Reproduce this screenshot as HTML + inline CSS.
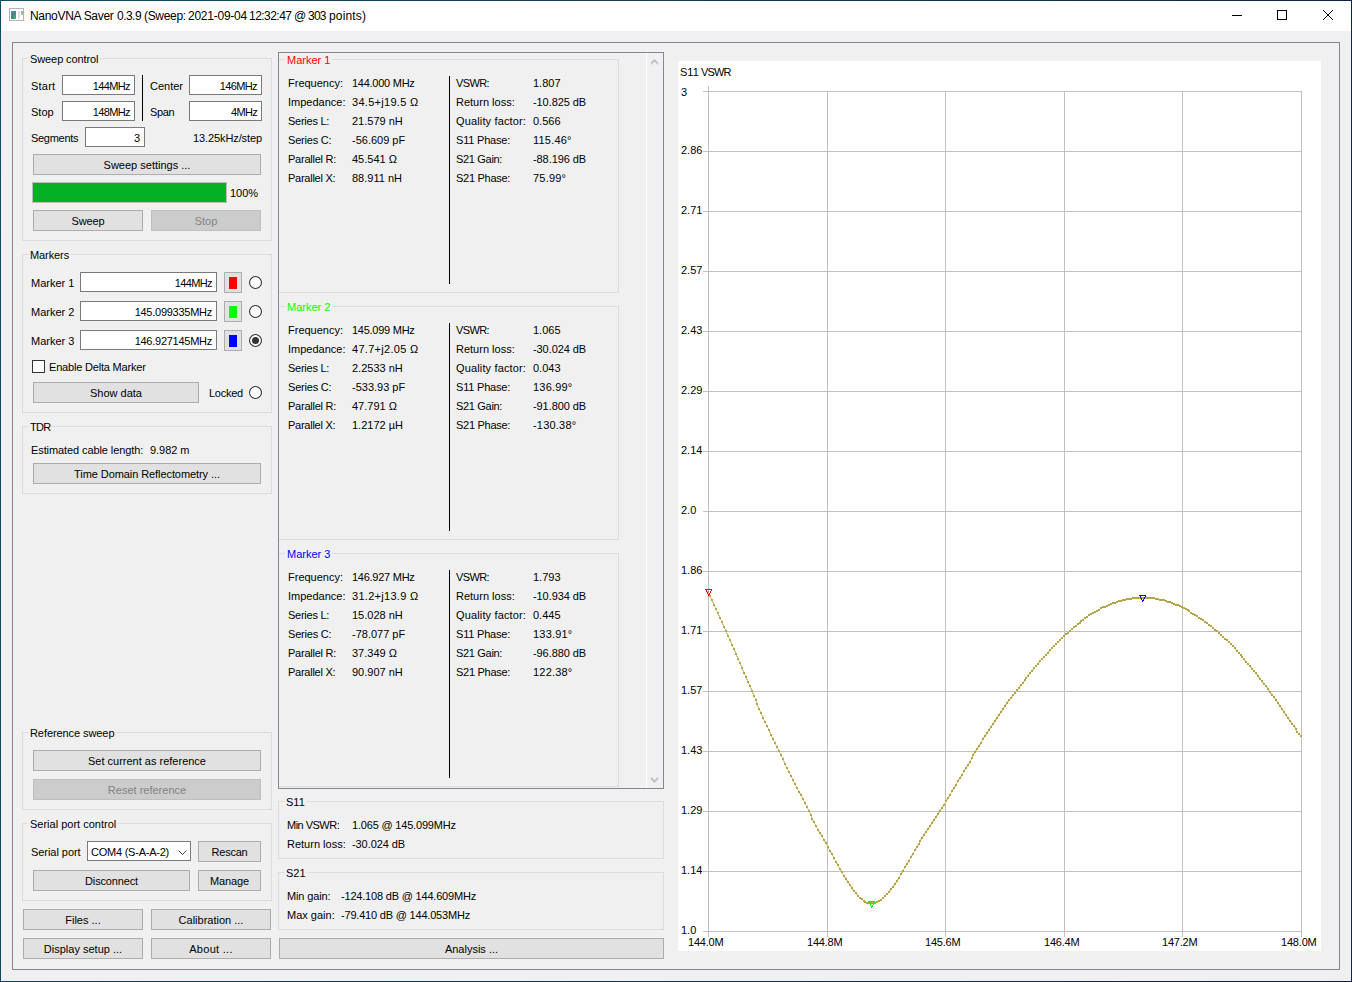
<!DOCTYPE html>
<html><head><meta charset="utf-8"><title>NanoVNA Saver</title>
<style>
html,body{margin:0;padding:0;}
body{width:1352px;height:982px;position:relative;overflow:hidden;background:#f0f0f0;font-family:"Liberation Sans", sans-serif;font-size:11px;color:#000;}
body>div,body>svg{position:absolute;}
</style></head><body>
<div style="left:0;top:0;width:1352px;height:31px;background:#fff"></div>
<div style="left:0;top:0;width:1352px;height:1px;background:linear-gradient(to right,#0f4c6b,#143a5e 50%,#0c2448)"></div>
<div style="left:0;top:0;width:1px;height:982px;background:linear-gradient(#0f4c6b,#0c4562)"></div>
<div style="left:1351px;top:0;width:1px;height:982px;background:#0c2650"></div>
<div style="left:0;top:981px;width:1352px;height:1px;background:linear-gradient(to right,#0c4562,#103458 50%,#0e1e40)"></div>
<svg style="left:9px;top:8px" width="15" height="13" viewBox="0 0 15 13">
<defs><linearGradient id="ig" x1="0" y1="0" x2="1" y2="1"><stop offset="0" stop-color="#5f86b8"/><stop offset="0.5" stop-color="#3f8a8e"/><stop offset="1" stop-color="#4fb060"/></linearGradient>
<linearGradient id="ig2" x1="0" y1="0" x2="0" y2="1"><stop offset="0" stop-color="#7fa2cc"/><stop offset="1" stop-color="#9fd890"/></linearGradient></defs>
<rect x="0.5" y="0.5" width="14" height="12" fill="#fff" stroke="#b0b3b8"/>
<rect x="2" y="3" width="5" height="8" fill="url(#ig)"/>
<rect x="9" y="3" width="2" height="8" fill="#e2e2e2"/>
<rect x="12" y="3" width="2" height="4" fill="url(#ig2)"/>
</svg>
<div style="top:8px;line-height:16px;height:16px;white-space:pre;font-size:12px;letter-spacing:-0.298px;left:30px;">NanoVNA Saver</div>
<div style="top:8px;line-height:16px;height:16px;white-space:pre;font-size:12px;letter-spacing:-0.534px;left:117px;">0.3.9</div>
<div style="top:8px;line-height:16px;height:16px;white-space:pre;font-size:12px;letter-spacing:-0.317px;left:144px;">(Sweep:</div>
<div style="top:8px;line-height:16px;height:16px;white-space:pre;font-size:12px;letter-spacing:-0.248px;left:188px;">2021-09-04</div>
<div style="top:8px;line-height:16px;height:16px;white-space:pre;font-size:12px;letter-spacing:-0.536px;left:249px;">12:32:47</div>
<div style="top:8px;line-height:16px;height:16px;white-space:pre;font-size:12px;letter-spacing:-1.488px;left:294px;">@</div>
<div style="top:8px;line-height:16px;height:16px;white-space:pre;font-size:12px;letter-spacing:-0.739px;left:308px;">303</div>
<div style="top:8px;line-height:16px;height:16px;white-space:pre;font-size:12px;letter-spacing:0.155px;left:329px;">points)</div>
<div style="left:1232px;top:15px;width:10px;height:1px;background:#000"></div>
<div style="left:1277px;top:10px;width:10px;height:10px;border:1px solid #000;box-sizing:border-box"></div>
<svg style="left:1322px;top:9px" width="12" height="12" viewBox="0 0 12 12"><path d="M1 1 L11 11 M11 1 L1 11" stroke="#000" stroke-width="1" fill="none"/></svg>
<div style="left:12px;top:42px;width:1328px;height:928px;border:1px solid #828790;box-sizing:border-box;"></div>
<div style="left:22px;top:58px;width:250px;height:183px;border:1px solid #dcdcdc;box-sizing:border-box;"></div>
<div style="left:28px;top:52px;padding:0 2px;background:#f0f0f0;line-height:14px;height:14px;white-space:pre;"><span style="letter-spacing:-0.096px">Sweep control</span></div>
<div style="top:79px;line-height:14px;height:14px;white-space:pre;letter-spacing:0.23px;left:31px;">Start</div>
<div style="left:62px;top:75px;width:73px;height:20px;background:#fff;border:1px solid #7a7a7a;box-sizing:border-box;text-align:right;padding-right:4px;line-height:20px;white-space:pre;overflow:hidden;"><span style="letter-spacing:-0.611px">144MHz</span></div>
<div style="top:105px;line-height:14px;height:14px;white-space:pre;left:31px;">Stop</div>
<div style="left:62px;top:101px;width:73px;height:20px;background:#fff;border:1px solid #7a7a7a;box-sizing:border-box;text-align:right;padding-right:4px;line-height:20px;white-space:pre;overflow:hidden;"><span style="letter-spacing:-0.611px">148MHz</span></div>
<div style="left:142px;top:75px;width:1px;height:46px;background:#000;"></div>
<div style="top:79px;line-height:14px;height:14px;white-space:pre;left:150px;">Center</div>
<div style="left:189px;top:75px;width:73px;height:20px;background:#fff;border:1px solid #7a7a7a;box-sizing:border-box;text-align:right;padding-right:4px;line-height:20px;white-space:pre;overflow:hidden;"><span style="letter-spacing:-0.611px">146MHz</span></div>
<div style="top:105px;line-height:14px;height:14px;white-space:pre;letter-spacing:-0.33px;left:150px;">Span</div>
<div style="left:189px;top:101px;width:73px;height:20px;background:#fff;border:1px solid #7a7a7a;box-sizing:border-box;text-align:right;padding-right:4px;line-height:20px;white-space:pre;overflow:hidden;"><span style="letter-spacing:-0.705px">4MHz</span></div>
<div style="top:131px;line-height:14px;height:14px;white-space:pre;letter-spacing:-0.295px;left:31px;">Segments</div>
<div style="left:85px;top:127px;width:60px;height:20px;background:#fff;border:1px solid #7a7a7a;box-sizing:border-box;text-align:right;padding-right:4px;line-height:20px;white-space:pre;overflow:hidden;">3</div>
<div style="top:131px;line-height:14px;height:14px;white-space:pre;letter-spacing:-0.106px;right:1090px;text-align:right;">13.25kHz/step</div>
<div style="left:33px;top:154px;width:228px;height:21px;background:#e1e1e1;border:1px solid #adadad;box-sizing:border-box;text-align:center;line-height:20px;white-space:pre;overflow:hidden;">Sweep settings ...</div>
<div style="left:32px;top:182px;width:195px;height:21px;background:#06b025;border:1px solid #bcbcbc;box-sizing:border-box;"></div>
<div style="top:186px;line-height:14px;height:14px;white-space:pre;left:230px;">100%</div>
<div style="left:33px;top:210px;width:110px;height:21px;background:#e1e1e1;border:1px solid #adadad;box-sizing:border-box;text-align:center;line-height:20px;white-space:pre;overflow:hidden;"><span style="letter-spacing:-0.151px">Sweep</span></div>
<div style="left:151px;top:210px;width:110px;height:21px;background:#cccccc;border:1px solid #bfbfbf;color:#838383;box-sizing:border-box;text-align:center;line-height:20px;white-space:pre;overflow:hidden;">Stop</div>
<div style="left:22px;top:254px;width:250px;height:159px;border:1px solid #dcdcdc;box-sizing:border-box;"></div>
<div style="left:28px;top:248px;padding:0 2px;background:#f0f0f0;line-height:14px;height:14px;white-space:pre;"><span style="letter-spacing:-0.088px">Markers</span></div>
<div style="top:276px;line-height:14px;height:14px;white-space:pre;left:31px;">Marker 1</div>
<div style="left:80px;top:272px;width:137px;height:20px;background:#fff;border:1px solid #7a7a7a;box-sizing:border-box;text-align:right;padding-right:4px;line-height:20px;white-space:pre;overflow:hidden;"><span style="letter-spacing:-0.611px">144MHz</span></div>
<div style="left:224px;top:272px;width:18px;height:21px;background:#e1e1e1;border:1px solid #adadad;box-sizing:border-box;"></div>
<div style="left:229px;top:277px;width:8px;height:12px;background:#ff0000;"></div>
<svg style="left:249px;top:276px" width="13" height="13" viewBox="0 0 13 13"><circle cx="6.5" cy="6.5" r="5.95" fill="#fff" stroke="#333" stroke-width="1.1"/></svg>
<div style="top:305px;line-height:14px;height:14px;white-space:pre;left:31px;">Marker 2</div>
<div style="left:80px;top:301px;width:137px;height:20px;background:#fff;border:1px solid #7a7a7a;box-sizing:border-box;text-align:right;padding-right:4px;line-height:20px;white-space:pre;overflow:hidden;"><span style="letter-spacing:-0.26px">145.099335MHz</span></div>
<div style="left:224px;top:301px;width:18px;height:21px;background:#e1e1e1;border:1px solid #adadad;box-sizing:border-box;"></div>
<div style="left:229px;top:306px;width:8px;height:12px;background:#00ff00;"></div>
<svg style="left:249px;top:305px" width="13" height="13" viewBox="0 0 13 13"><circle cx="6.5" cy="6.5" r="5.95" fill="#fff" stroke="#333" stroke-width="1.1"/></svg>
<div style="top:334px;line-height:14px;height:14px;white-space:pre;left:31px;">Marker 3</div>
<div style="left:80px;top:330px;width:137px;height:20px;background:#fff;border:1px solid #7a7a7a;box-sizing:border-box;text-align:right;padding-right:4px;line-height:20px;white-space:pre;overflow:hidden;"><span style="letter-spacing:-0.26px">146.927145MHz</span></div>
<div style="left:224px;top:330px;width:18px;height:21px;background:#e1e1e1;border:1px solid #adadad;box-sizing:border-box;"></div>
<div style="left:229px;top:335px;width:8px;height:12px;background:#0000ff;"></div>
<svg style="left:249px;top:334px" width="13" height="13" viewBox="0 0 13 13"><circle cx="6.5" cy="6.5" r="5.95" fill="#fff" stroke="#333" stroke-width="1.1"/><circle cx="6.5" cy="6.5" r="3.5" fill="#333"/></svg>
<div style="left:32px;top:360px;width:13px;height:13px;background:#fff;border:1px solid #333;box-sizing:border-box;"></div>
<div style="top:360px;line-height:14px;height:14px;white-space:pre;letter-spacing:-0.19px;left:49px;">Enable Delta Marker</div>
<div style="left:33px;top:382px;width:166px;height:21px;background:#e1e1e1;border:1px solid #adadad;box-sizing:border-box;text-align:center;line-height:20px;white-space:pre;overflow:hidden;">Show data</div>
<div style="top:386px;line-height:14px;height:14px;white-space:pre;letter-spacing:-0.25px;left:209px;">Locked</div>
<svg style="left:249px;top:386px" width="13" height="13" viewBox="0 0 13 13"><circle cx="6.5" cy="6.5" r="5.95" fill="#fff" stroke="#333" stroke-width="1.1"/></svg>
<div style="left:22px;top:426px;width:250px;height:68px;border:1px solid #dcdcdc;box-sizing:border-box;"></div>
<div style="left:28px;top:420px;padding:0 2px;background:#f0f0f0;line-height:14px;height:14px;white-space:pre;"><span style="letter-spacing:-0.765px">TDR</span></div>
<div style="top:443px;line-height:14px;height:14px;white-space:pre;letter-spacing:-0.093px;left:31px;">Estimated cable length:</div>
<div style="top:443px;line-height:14px;height:14px;white-space:pre;letter-spacing:-0.054px;left:150px;">9.982 m</div>
<div style="left:33px;top:463px;width:228px;height:21px;background:#e1e1e1;border:1px solid #adadad;box-sizing:border-box;text-align:center;line-height:20px;white-space:pre;overflow:hidden;"><span style="letter-spacing:-0.079px">Time Domain Reflectometry ...</span></div>
<div style="left:22px;top:732px;width:250px;height:78px;border:1px solid #dcdcdc;box-sizing:border-box;"></div>
<div style="left:28px;top:726px;padding:0 2px;background:#f0f0f0;line-height:14px;height:14px;white-space:pre;"><span style="letter-spacing:-0.077px">Reference sweep</span></div>
<div style="left:33px;top:750px;width:228px;height:21px;background:#e1e1e1;border:1px solid #adadad;box-sizing:border-box;text-align:center;line-height:20px;white-space:pre;overflow:hidden;">Set current as reference</div>
<div style="left:33px;top:779px;width:228px;height:21px;background:#cccccc;border:1px solid #bfbfbf;color:#838383;box-sizing:border-box;text-align:center;line-height:20px;white-space:pre;overflow:hidden;">Reset reference</div>
<div style="left:22px;top:823px;width:250px;height:78px;border:1px solid #dcdcdc;box-sizing:border-box;"></div>
<div style="left:28px;top:817px;padding:0 2px;background:#f0f0f0;line-height:14px;height:14px;white-space:pre;">Serial port control</div>
<div style="top:845px;line-height:14px;height:14px;white-space:pre;letter-spacing:-0.051px;left:31px;">Serial port</div>
<div style="left:87px;top:841px;width:104px;height:20px;background:#fff;border:1px solid #7a7a7a;box-sizing:border-box;line-height:20px;padding-left:3px;white-space:pre;overflow:hidden;"><span style="letter-spacing:-0.234px">COM4 (S-A-A-2)</span></div>
<svg style="left:176.5px;top:848.5px" width="11" height="8" viewBox="0 0 11 8"><path d="M1.5 1.5 L5.5 5.5 L9.5 1.5" stroke="#444" stroke-width="1" fill="none"/></svg>
<div style="left:198px;top:841px;width:63px;height:21px;background:#e1e1e1;border:1px solid #adadad;box-sizing:border-box;text-align:center;line-height:20px;white-space:pre;overflow:hidden;"><span style="letter-spacing:-0.235px">Rescan</span></div>
<div style="left:33px;top:870px;width:157px;height:21px;background:#e1e1e1;border:1px solid #adadad;box-sizing:border-box;text-align:center;line-height:20px;white-space:pre;overflow:hidden;"><span style="letter-spacing:-0.154px">Disconnect</span></div>
<div style="left:198px;top:870px;width:63px;height:21px;background:#e1e1e1;border:1px solid #adadad;box-sizing:border-box;text-align:center;line-height:20px;white-space:pre;overflow:hidden;"><span style="letter-spacing:-0.147px">Manage</span></div>
<div style="left:23px;top:909px;width:120px;height:21px;background:#e1e1e1;border:1px solid #adadad;box-sizing:border-box;text-align:center;line-height:20px;white-space:pre;overflow:hidden;">Files ...</div>
<div style="left:151px;top:909px;width:120px;height:21px;background:#e1e1e1;border:1px solid #adadad;box-sizing:border-box;text-align:center;line-height:20px;white-space:pre;overflow:hidden;">Calibration ...</div>
<div style="left:23px;top:938px;width:120px;height:21px;background:#e1e1e1;border:1px solid #adadad;box-sizing:border-box;text-align:center;line-height:20px;white-space:pre;overflow:hidden;">Display setup ...</div>
<div style="left:151px;top:938px;width:120px;height:21px;background:#e1e1e1;border:1px solid #adadad;box-sizing:border-box;text-align:center;line-height:20px;white-space:pre;overflow:hidden;"><span style="letter-spacing:0.297px">About ...</span></div>
<div style="left:278px;top:52px;width:386px;height:737px;border:1px solid #828790;box-sizing:border-box;"></div>
<div style="left:646px;top:53px;width:1px;height:735px;background:#fff;"></div>
<svg style="left:647px;top:53px" width="16" height="735" viewBox="647 53 16 735"><path d="M654.5 58.9 L658.1 62.5 V65 L654.5 61.5 L650.9 65 V62.5 Z M654.5 782.9 L658.1 779.3 V776.8 L654.5 780.3 L650.9 776.8 V779.3 Z" fill="#bdbdbd"/></svg>
<div style="left:279px;top:59px;width:340px;height:234px;border:1px solid #dcdcdc;border-left:none;box-sizing:border-box;"></div>
<div style="left:285px;top:53px;padding:0 2px;background:#f0f0f0;line-height:14px;height:14px;color:#ff0000;white-space:pre;">Marker 1</div>
<div style="left:449px;top:76px;width:1px;height:208px;background:#000;"></div>
<div style="top:76px;line-height:14px;height:14px;white-space:pre;left:288px;">Frequency:</div>
<div style="top:76px;line-height:14px;height:14px;white-space:pre;letter-spacing:-0.261px;left:352px;">144.000 MHz</div>
<div style="top:76px;line-height:14px;height:14px;white-space:pre;letter-spacing:-0.613px;left:456px;">VSWR:</div>
<div style="top:76px;line-height:14px;height:14px;white-space:pre;left:533px;">1.807</div>
<div style="top:95px;line-height:14px;height:14px;white-space:pre;left:288px;">Impedance:</div>
<div style="top:95px;line-height:14px;height:14px;white-space:pre;letter-spacing:0.29px;left:352px;">34.5+j19.5 Ω</div>
<div style="top:95px;line-height:14px;height:14px;white-space:pre;left:456px;">Return loss:</div>
<div style="top:95px;line-height:14px;height:14px;white-space:pre;letter-spacing:-0.08px;left:533px;">-10.825 dB</div>
<div style="top:114px;line-height:14px;height:14px;white-space:pre;letter-spacing:-0.249px;left:288px;">Series L:</div>
<div style="top:114px;line-height:14px;height:14px;white-space:pre;left:352px;">21.579 nH</div>
<div style="top:114px;line-height:14px;height:14px;white-space:pre;letter-spacing:0.146px;left:456px;">Quality factor:</div>
<div style="top:114px;line-height:14px;height:14px;white-space:pre;left:533px;">0.566</div>
<div style="top:133px;line-height:14px;height:14px;white-space:pre;letter-spacing:-0.206px;left:288px;">Series C:</div>
<div style="top:133px;line-height:14px;height:14px;white-space:pre;left:352px;">-56.609 pF</div>
<div style="top:133px;line-height:14px;height:14px;white-space:pre;letter-spacing:-0.202px;left:456px;">S11 Phase:</div>
<div style="top:133px;line-height:14px;height:14px;white-space:pre;letter-spacing:0.2px;left:533px;">115.46°</div>
<div style="top:152px;line-height:14px;height:14px;white-space:pre;letter-spacing:-0.236px;left:288px;">Parallel R:</div>
<div style="top:152px;line-height:14px;height:14px;white-space:pre;left:352px;">45.541 Ω</div>
<div style="top:152px;line-height:14px;height:14px;white-space:pre;letter-spacing:-0.319px;left:456px;">S21 Gain:</div>
<div style="top:152px;line-height:14px;height:14px;white-space:pre;letter-spacing:-0.08px;left:533px;">-88.196 dB</div>
<div style="top:171px;line-height:14px;height:14px;white-space:pre;letter-spacing:-0.251px;left:288px;">Parallel X:</div>
<div style="top:171px;line-height:14px;height:14px;white-space:pre;left:352px;">88.911 nH</div>
<div style="top:171px;line-height:14px;height:14px;white-space:pre;letter-spacing:-0.284px;left:456px;">S21 Phase:</div>
<div style="top:171px;line-height:14px;height:14px;white-space:pre;letter-spacing:0.2px;left:533px;">75.99°</div>
<div style="left:279px;top:306px;width:340px;height:234px;border:1px solid #dcdcdc;border-left:none;box-sizing:border-box;"></div>
<div style="left:285px;top:300px;padding:0 2px;background:#f0f0f0;line-height:14px;height:14px;color:#00ff00;white-space:pre;">Marker 2</div>
<div style="left:449px;top:323px;width:1px;height:208px;background:#000;"></div>
<div style="top:323px;line-height:14px;height:14px;white-space:pre;left:288px;">Frequency:</div>
<div style="top:323px;line-height:14px;height:14px;white-space:pre;letter-spacing:-0.261px;left:352px;">145.099 MHz</div>
<div style="top:323px;line-height:14px;height:14px;white-space:pre;letter-spacing:-0.613px;left:456px;">VSWR:</div>
<div style="top:323px;line-height:14px;height:14px;white-space:pre;left:533px;">1.065</div>
<div style="top:342px;line-height:14px;height:14px;white-space:pre;left:288px;">Impedance:</div>
<div style="top:342px;line-height:14px;height:14px;white-space:pre;letter-spacing:0.29px;left:352px;">47.7+j2.05 Ω</div>
<div style="top:342px;line-height:14px;height:14px;white-space:pre;left:456px;">Return loss:</div>
<div style="top:342px;line-height:14px;height:14px;white-space:pre;letter-spacing:-0.08px;left:533px;">-30.024 dB</div>
<div style="top:361px;line-height:14px;height:14px;white-space:pre;letter-spacing:-0.249px;left:288px;">Series L:</div>
<div style="top:361px;line-height:14px;height:14px;white-space:pre;left:352px;">2.2533 nH</div>
<div style="top:361px;line-height:14px;height:14px;white-space:pre;letter-spacing:0.146px;left:456px;">Quality factor:</div>
<div style="top:361px;line-height:14px;height:14px;white-space:pre;left:533px;">0.043</div>
<div style="top:380px;line-height:14px;height:14px;white-space:pre;letter-spacing:-0.206px;left:288px;">Series C:</div>
<div style="top:380px;line-height:14px;height:14px;white-space:pre;left:352px;">-533.93 pF</div>
<div style="top:380px;line-height:14px;height:14px;white-space:pre;letter-spacing:-0.202px;left:456px;">S11 Phase:</div>
<div style="top:380px;line-height:14px;height:14px;white-space:pre;letter-spacing:0.2px;left:533px;">136.99°</div>
<div style="top:399px;line-height:14px;height:14px;white-space:pre;letter-spacing:-0.236px;left:288px;">Parallel R:</div>
<div style="top:399px;line-height:14px;height:14px;white-space:pre;left:352px;">47.791 Ω</div>
<div style="top:399px;line-height:14px;height:14px;white-space:pre;letter-spacing:-0.319px;left:456px;">S21 Gain:</div>
<div style="top:399px;line-height:14px;height:14px;white-space:pre;letter-spacing:-0.08px;left:533px;">-91.800 dB</div>
<div style="top:418px;line-height:14px;height:14px;white-space:pre;letter-spacing:-0.251px;left:288px;">Parallel X:</div>
<div style="top:418px;line-height:14px;height:14px;white-space:pre;left:352px;">1.2172 µH</div>
<div style="top:418px;line-height:14px;height:14px;white-space:pre;letter-spacing:-0.284px;left:456px;">S21 Phase:</div>
<div style="top:418px;line-height:14px;height:14px;white-space:pre;letter-spacing:0.2px;left:533px;">-130.38°</div>
<div style="left:279px;top:553px;width:340px;height:234px;border:1px solid #dcdcdc;border-left:none;box-sizing:border-box;"></div>
<div style="left:285px;top:547px;padding:0 2px;background:#f0f0f0;line-height:14px;height:14px;color:#0000ff;white-space:pre;">Marker 3</div>
<div style="left:449px;top:570px;width:1px;height:208px;background:#000;"></div>
<div style="top:570px;line-height:14px;height:14px;white-space:pre;left:288px;">Frequency:</div>
<div style="top:570px;line-height:14px;height:14px;white-space:pre;letter-spacing:-0.261px;left:352px;">146.927 MHz</div>
<div style="top:570px;line-height:14px;height:14px;white-space:pre;letter-spacing:-0.613px;left:456px;">VSWR:</div>
<div style="top:570px;line-height:14px;height:14px;white-space:pre;left:533px;">1.793</div>
<div style="top:589px;line-height:14px;height:14px;white-space:pre;left:288px;">Impedance:</div>
<div style="top:589px;line-height:14px;height:14px;white-space:pre;letter-spacing:0.29px;left:352px;">31.2+j13.9 Ω</div>
<div style="top:589px;line-height:14px;height:14px;white-space:pre;left:456px;">Return loss:</div>
<div style="top:589px;line-height:14px;height:14px;white-space:pre;letter-spacing:-0.08px;left:533px;">-10.934 dB</div>
<div style="top:608px;line-height:14px;height:14px;white-space:pre;letter-spacing:-0.249px;left:288px;">Series L:</div>
<div style="top:608px;line-height:14px;height:14px;white-space:pre;left:352px;">15.028 nH</div>
<div style="top:608px;line-height:14px;height:14px;white-space:pre;letter-spacing:0.146px;left:456px;">Quality factor:</div>
<div style="top:608px;line-height:14px;height:14px;white-space:pre;left:533px;">0.445</div>
<div style="top:627px;line-height:14px;height:14px;white-space:pre;letter-spacing:-0.206px;left:288px;">Series C:</div>
<div style="top:627px;line-height:14px;height:14px;white-space:pre;left:352px;">-78.077 pF</div>
<div style="top:627px;line-height:14px;height:14px;white-space:pre;letter-spacing:-0.202px;left:456px;">S11 Phase:</div>
<div style="top:627px;line-height:14px;height:14px;white-space:pre;letter-spacing:0.2px;left:533px;">133.91°</div>
<div style="top:646px;line-height:14px;height:14px;white-space:pre;letter-spacing:-0.236px;left:288px;">Parallel R:</div>
<div style="top:646px;line-height:14px;height:14px;white-space:pre;left:352px;">37.349 Ω</div>
<div style="top:646px;line-height:14px;height:14px;white-space:pre;letter-spacing:-0.319px;left:456px;">S21 Gain:</div>
<div style="top:646px;line-height:14px;height:14px;white-space:pre;letter-spacing:-0.08px;left:533px;">-96.880 dB</div>
<div style="top:665px;line-height:14px;height:14px;white-space:pre;letter-spacing:-0.251px;left:288px;">Parallel X:</div>
<div style="top:665px;line-height:14px;height:14px;white-space:pre;left:352px;">90.907 nH</div>
<div style="top:665px;line-height:14px;height:14px;white-space:pre;letter-spacing:-0.284px;left:456px;">S21 Phase:</div>
<div style="top:665px;line-height:14px;height:14px;white-space:pre;letter-spacing:0.2px;left:533px;">122.38°</div>
<div style="left:278px;top:801px;width:386px;height:58px;border:1px solid #dcdcdc;box-sizing:border-box;"></div>
<div style="left:284px;top:795px;padding:0 2px;background:#f0f0f0;line-height:14px;height:14px;white-space:pre;">S11</div>
<div style="top:818px;line-height:14px;height:14px;white-space:pre;letter-spacing:-0.516px;left:287px;">Min VSWR:</div>
<div style="top:818px;line-height:14px;height:14px;white-space:pre;letter-spacing:-0.187px;left:352px;">1.065 @ 145.099MHz</div>
<div style="top:837px;line-height:14px;height:14px;white-space:pre;left:287px;">Return loss:</div>
<div style="top:837px;line-height:14px;height:14px;white-space:pre;letter-spacing:-0.08px;left:352px;">-30.024 dB</div>
<div style="left:278px;top:872px;width:386px;height:58px;border:1px solid #dcdcdc;box-sizing:border-box;"></div>
<div style="left:284px;top:866px;padding:0 2px;background:#f0f0f0;line-height:14px;height:14px;white-space:pre;">S21</div>
<div style="top:889px;line-height:14px;height:14px;white-space:pre;letter-spacing:-0.128px;left:287px;">Min gain:</div>
<div style="top:889px;line-height:14px;height:14px;white-space:pre;letter-spacing:-0.192px;left:341px;">-124.108 dB @ 144.609MHz</div>
<div style="top:908px;line-height:14px;height:14px;white-space:pre;left:287px;">Max gain:</div>
<div style="top:908px;line-height:14px;height:14px;white-space:pre;letter-spacing:-0.195px;left:341px;">-79.410 dB @ 144.053MHz</div>
<div style="left:279px;top:938px;width:385px;height:21px;background:#e1e1e1;border:1px solid #adadad;box-sizing:border-box;text-align:center;line-height:20px;white-space:pre;overflow:hidden;">Analysis ...</div>
<div style="left:678px;top:61px;width:643px;height:890px;background:#fff;"></div>
<div style="top:65px;line-height:14px;height:14px;white-space:pre;left:680px;">S11</div>
<div style="top:65px;line-height:14px;height:14px;white-space:pre;letter-spacing:-0.875px;left:701px;">VSWR</div>
<svg style="left:678px;top:61px" width="643" height="890" viewBox="678 61 643 890" shape-rendering="crispEdges"><rect x="703" y="91" width="599" height="1" fill="#c0c0c0"/><rect x="703" y="151" width="599" height="1" fill="#c0c0c0"/><rect x="703" y="211" width="599" height="1" fill="#c0c0c0"/><rect x="703" y="271" width="599" height="1" fill="#c0c0c0"/><rect x="703" y="331" width="599" height="1" fill="#c0c0c0"/><rect x="703" y="391" width="599" height="1" fill="#c0c0c0"/><rect x="703" y="451" width="599" height="1" fill="#c0c0c0"/><rect x="703" y="511" width="599" height="1" fill="#c0c0c0"/><rect x="703" y="571" width="599" height="1" fill="#c0c0c0"/><rect x="703" y="631" width="599" height="1" fill="#c0c0c0"/><rect x="703" y="691" width="599" height="1" fill="#c0c0c0"/><rect x="703" y="751" width="599" height="1" fill="#c0c0c0"/><rect x="703" y="811" width="599" height="1" fill="#c0c0c0"/><rect x="703" y="871" width="599" height="1" fill="#c0c0c0"/><rect x="703" y="931" width="599" height="1" fill="#c0c0c0"/><rect x="708" y="86" width="1" height="851" fill="#c0c0c0"/><rect x="827" y="91" width="1" height="846" fill="#c0c0c0"/><rect x="945" y="91" width="1" height="846" fill="#c0c0c0"/><rect x="1064" y="91" width="1" height="846" fill="#c0c0c0"/><rect x="1182" y="91" width="1" height="846" fill="#c0c0c0"/><rect x="1301" y="91" width="1" height="846" fill="#c0c0c0"/></svg>
<div style="top:85px;line-height:14px;height:14px;white-space:pre;left:681px;">3</div>
<div style="top:143px;line-height:14px;height:14px;white-space:pre;left:681px;">2.86</div>
<div style="top:203px;line-height:14px;height:14px;white-space:pre;left:681px;">2.71</div>
<div style="top:263px;line-height:14px;height:14px;white-space:pre;left:681px;">2.57</div>
<div style="top:323px;line-height:14px;height:14px;white-space:pre;left:681px;">2.43</div>
<div style="top:383px;line-height:14px;height:14px;white-space:pre;left:681px;">2.29</div>
<div style="top:443px;line-height:14px;height:14px;white-space:pre;left:681px;">2.14</div>
<div style="top:503px;line-height:14px;height:14px;white-space:pre;left:681px;">2.0</div>
<div style="top:563px;line-height:14px;height:14px;white-space:pre;left:681px;">1.86</div>
<div style="top:623px;line-height:14px;height:14px;white-space:pre;left:681px;">1.71</div>
<div style="top:683px;line-height:14px;height:14px;white-space:pre;left:681px;">1.57</div>
<div style="top:743px;line-height:14px;height:14px;white-space:pre;left:681px;">1.43</div>
<div style="top:803px;line-height:14px;height:14px;white-space:pre;left:681px;">1.29</div>
<div style="top:863px;line-height:14px;height:14px;white-space:pre;left:681px;">1.14</div>
<div style="top:923px;line-height:14px;height:14px;white-space:pre;left:681px;">1.0</div>
<div style="top:935px;line-height:14px;height:14px;white-space:pre;letter-spacing:-0.22px;left:688px;">144.0M</div>
<div style="top:935px;line-height:14px;height:14px;white-space:pre;letter-spacing:-0.22px;left:807px;">144.8M</div>
<div style="top:935px;line-height:14px;height:14px;white-space:pre;letter-spacing:-0.22px;left:925px;">145.6M</div>
<div style="top:935px;line-height:14px;height:14px;white-space:pre;letter-spacing:-0.22px;left:1044px;">146.4M</div>
<div style="top:935px;line-height:14px;height:14px;white-space:pre;letter-spacing:-0.22px;left:1162px;">147.2M</div>
<div style="top:935px;line-height:14px;height:14px;white-space:pre;letter-spacing:-0.186px;left:1281px;">148.0M</div>
<svg style="left:678px;top:61px" width="643" height="890" viewBox="678 61 643 890" shape-rendering="crispEdges"><path d="M708 592 L710 596 L712 600 L714 605 L716 609 L718 613 L720 618 L722 622 L724 627 L726 631 L728 636 L730 640 L732 645 L734 649 L736 654 L738 659 L740 663 L742 668 L744 673 L746 677 L748 682 L750 686 L752 691 L754 696 L756 700 L757 704 L759 709 L761 713 L763 718 L765 722 L767 726 L769 730 L771 735 L773 739 L775 743 L777 747 L779 751 L781 755 L783 759 L785 764 L787 768 L789 772 L791 776 L793 780 L795 784 L797 788 L799 792 L801 795 L803 799 L805 803 L807 807 L809 811 L811 815 L812 819 L814 822 L816 826 L818 830 L820 833 L822 836 L824 840 L826 843 L828 847 L830 851 L832 854 L834 858 L836 862 L838 865 L840 869 L842 872 L844 876 L846 879 L848 882 L850 885 L852 888 L854 891 L856 893 L858 896 L860 898 L862 899 L864 901 L865 902 L867 903 L869 903 L871 903 L873 903 L875 903 L877 902 L879 901 L881 900 L883 898 L885 896 L887 894 L889 892 L891 889 L893 887 L895 884 L897 881 L899 878 L901 874 L903 871 L905 867 L907 864 L909 861 L911 857 L913 854 L915 850 L917 847 L919 844 L920 841 L922 838 L924 835 L926 832 L928 829 L930 826 L932 823 L934 820 L936 817 L938 814 L940 811 L942 808 L944 805 L946 801 L948 798 L950 795 L952 791 L954 788 L956 785 L958 781 L960 778 L962 775 L964 771 L966 768 L968 765 L970 762 L972 758 L973 755 L975 752 L977 749 L979 746 L981 743 L983 739 L985 736 L987 733 L989 730 L991 727 L993 724 L995 721 L997 718 L999 715 L1001 712 L1003 709 L1005 706 L1007 703 L1009 700 L1011 698 L1013 695 L1015 693 L1017 690 L1019 688 L1021 685 L1023 683 L1025 680 L1026 678 L1028 676 L1030 673 L1032 671 L1034 668 L1036 666 L1038 664 L1040 661 L1042 659 L1044 657 L1046 655 L1048 653 L1050 650 L1052 648 L1054 646 L1056 644 L1058 642 L1060 640 L1062 638 L1064 636 L1066 634 L1068 633 L1070 631 L1072 629 L1074 627 L1076 626 L1078 624 L1080 623 L1081 621 L1083 620 L1085 618 L1087 617 L1089 615 L1091 614 L1093 613 L1095 612 L1097 611 L1099 610 L1101 608 L1103 607 L1105 607 L1107 606 L1109 605 L1111 604 L1113 603 L1115 603 L1117 602 L1119 601 L1121 601 L1123 600 L1125 600 L1127 599 L1129 599 L1131 599 L1133 598 L1134 598 L1136 598 L1138 598 L1140 598 L1142 598 L1144 598 L1146 598 L1148 598 L1150 598 L1152 598 L1154 598 L1156 599 L1158 599 L1160 600 L1162 600 L1164 600 L1166 601 L1168 602 L1170 602 L1172 603 L1174 604 L1176 605 L1178 605 L1180 606 L1182 607 L1184 608 L1186 609 L1188 610 L1189 611 L1191 613 L1193 614 L1195 615 L1197 616 L1199 618 L1201 619 L1203 620 L1205 622 L1207 623 L1209 625 L1211 626 L1213 628 L1215 630 L1217 631 L1219 633 L1221 635 L1223 637 L1225 639 L1227 640 L1229 642 L1231 644 L1233 646 L1235 648 L1237 651 L1239 653 L1241 655 L1242 657 L1244 659 L1246 662 L1248 664 L1250 666 L1252 669 L1254 671 L1256 673 L1258 676 L1260 679 L1262 681 L1264 684 L1266 686 L1268 689 L1270 692 L1272 695 L1274 697 L1276 700 L1278 703 L1280 706 L1282 709 L1284 712 L1286 715 L1288 718 L1290 721 L1292 724 L1294 726 L1296 729 L1297 732 L1299 734 L1301 736" fill="none" stroke="#d2c88f" stroke-width="1"/><path d="M707 591h2v2h-2zM709 595h2v2h-2zM711 599h2v2h-2zM713 604h2v2h-2zM715 608h2v2h-2zM717 612h2v2h-2zM719 617h2v2h-2zM721 621h2v2h-2zM723 626h2v2h-2zM725 630h2v2h-2zM727 635h2v2h-2zM729 639h2v2h-2zM731 644h2v2h-2zM733 648h2v2h-2zM735 653h2v2h-2zM737 658h2v2h-2zM739 662h2v2h-2zM741 667h2v2h-2zM743 672h2v2h-2zM745 676h2v2h-2zM747 681h2v2h-2zM749 685h2v2h-2zM751 690h2v2h-2zM753 695h2v2h-2zM755 699h2v2h-2zM756 703h2v2h-2zM758 708h2v2h-2zM760 712h2v2h-2zM762 717h2v2h-2zM764 721h2v2h-2zM766 725h2v2h-2zM768 729h2v2h-2zM770 734h2v2h-2zM772 738h2v2h-2zM774 742h2v2h-2zM776 746h2v2h-2zM778 750h2v2h-2zM780 754h2v2h-2zM782 758h2v2h-2zM784 763h2v2h-2zM786 767h2v2h-2zM788 771h2v2h-2zM790 775h2v2h-2zM792 779h2v2h-2zM794 783h2v2h-2zM796 787h2v2h-2zM798 791h2v2h-2zM800 794h2v2h-2zM802 798h2v2h-2zM804 802h2v2h-2zM806 806h2v2h-2zM808 810h2v2h-2zM810 814h2v2h-2zM811 818h2v2h-2zM813 821h2v2h-2zM815 825h2v2h-2zM817 829h2v2h-2zM819 832h2v2h-2zM821 835h2v2h-2zM823 839h2v2h-2zM825 842h2v2h-2zM827 846h2v2h-2zM829 850h2v2h-2zM831 853h2v2h-2zM833 857h2v2h-2zM835 861h2v2h-2zM837 864h2v2h-2zM839 868h2v2h-2zM841 871h2v2h-2zM843 875h2v2h-2zM845 878h2v2h-2zM847 881h2v2h-2zM849 884h2v2h-2zM851 887h2v2h-2zM853 890h2v2h-2zM855 892h2v2h-2zM857 895h2v2h-2zM859 897h2v2h-2zM861 898h2v2h-2zM863 900h2v2h-2zM864 901h2v2h-2zM866 902h2v2h-2zM868 902h2v2h-2zM870 902h2v2h-2zM872 902h2v2h-2zM874 902h2v2h-2zM876 901h2v2h-2zM878 900h2v2h-2zM880 899h2v2h-2zM882 897h2v2h-2zM884 895h2v2h-2zM886 893h2v2h-2zM888 891h2v2h-2zM890 888h2v2h-2zM892 886h2v2h-2zM894 883h2v2h-2zM896 880h2v2h-2zM898 877h2v2h-2zM900 873h2v2h-2zM902 870h2v2h-2zM904 866h2v2h-2zM906 863h2v2h-2zM908 860h2v2h-2zM910 856h2v2h-2zM912 853h2v2h-2zM914 849h2v2h-2zM916 846h2v2h-2zM918 843h2v2h-2zM919 840h2v2h-2zM921 837h2v2h-2zM923 834h2v2h-2zM925 831h2v2h-2zM927 828h2v2h-2zM929 825h2v2h-2zM931 822h2v2h-2zM933 819h2v2h-2zM935 816h2v2h-2zM937 813h2v2h-2zM939 810h2v2h-2zM941 807h2v2h-2zM943 804h2v2h-2zM945 800h2v2h-2zM947 797h2v2h-2zM949 794h2v2h-2zM951 790h2v2h-2zM953 787h2v2h-2zM955 784h2v2h-2zM957 780h2v2h-2zM959 777h2v2h-2zM961 774h2v2h-2zM963 770h2v2h-2zM965 767h2v2h-2zM967 764h2v2h-2zM969 761h2v2h-2zM971 757h2v2h-2zM972 754h2v2h-2zM974 751h2v2h-2zM976 748h2v2h-2zM978 745h2v2h-2zM980 742h2v2h-2zM982 738h2v2h-2zM984 735h2v2h-2zM986 732h2v2h-2zM988 729h2v2h-2zM990 726h2v2h-2zM992 723h2v2h-2zM994 720h2v2h-2zM996 717h2v2h-2zM998 714h2v2h-2zM1000 711h2v2h-2zM1002 708h2v2h-2zM1004 705h2v2h-2zM1006 702h2v2h-2zM1008 699h2v2h-2zM1010 697h2v2h-2zM1012 694h2v2h-2zM1014 692h2v2h-2zM1016 689h2v2h-2zM1018 687h2v2h-2zM1020 684h2v2h-2zM1022 682h2v2h-2zM1024 679h2v2h-2zM1025 677h2v2h-2zM1027 675h2v2h-2zM1029 672h2v2h-2zM1031 670h2v2h-2zM1033 667h2v2h-2zM1035 665h2v2h-2zM1037 663h2v2h-2zM1039 660h2v2h-2zM1041 658h2v2h-2zM1043 656h2v2h-2zM1045 654h2v2h-2zM1047 652h2v2h-2zM1049 649h2v2h-2zM1051 647h2v2h-2zM1053 645h2v2h-2zM1055 643h2v2h-2zM1057 641h2v2h-2zM1059 639h2v2h-2zM1061 637h2v2h-2zM1063 635h2v2h-2zM1065 633h2v2h-2zM1067 632h2v2h-2zM1069 630h2v2h-2zM1071 628h2v2h-2zM1073 626h2v2h-2zM1075 625h2v2h-2zM1077 623h2v2h-2zM1079 622h2v2h-2zM1080 620h2v2h-2zM1082 619h2v2h-2zM1084 617h2v2h-2zM1086 616h2v2h-2zM1088 614h2v2h-2zM1090 613h2v2h-2zM1092 612h2v2h-2zM1094 611h2v2h-2zM1096 610h2v2h-2zM1098 609h2v2h-2zM1100 607h2v2h-2zM1102 606h2v2h-2zM1104 606h2v2h-2zM1106 605h2v2h-2zM1108 604h2v2h-2zM1110 603h2v2h-2zM1112 602h2v2h-2zM1114 602h2v2h-2zM1116 601h2v2h-2zM1118 600h2v2h-2zM1120 600h2v2h-2zM1122 599h2v2h-2zM1124 599h2v2h-2zM1126 598h2v2h-2zM1128 598h2v2h-2zM1130 598h2v2h-2zM1132 597h2v2h-2zM1133 597h2v2h-2zM1135 597h2v2h-2zM1137 597h2v2h-2zM1139 597h2v2h-2zM1141 597h2v2h-2zM1143 597h2v2h-2zM1145 597h2v2h-2zM1147 597h2v2h-2zM1149 597h2v2h-2zM1151 597h2v2h-2zM1153 597h2v2h-2zM1155 598h2v2h-2zM1157 598h2v2h-2zM1159 599h2v2h-2zM1161 599h2v2h-2zM1163 599h2v2h-2zM1165 600h2v2h-2zM1167 601h2v2h-2zM1169 601h2v2h-2zM1171 602h2v2h-2zM1173 603h2v2h-2zM1175 604h2v2h-2zM1177 604h2v2h-2zM1179 605h2v2h-2zM1181 606h2v2h-2zM1183 607h2v2h-2zM1185 608h2v2h-2zM1187 609h2v2h-2zM1188 610h2v2h-2zM1190 612h2v2h-2zM1192 613h2v2h-2zM1194 614h2v2h-2zM1196 615h2v2h-2zM1198 617h2v2h-2zM1200 618h2v2h-2zM1202 619h2v2h-2zM1204 621h2v2h-2zM1206 622h2v2h-2zM1208 624h2v2h-2zM1210 625h2v2h-2zM1212 627h2v2h-2zM1214 629h2v2h-2zM1216 630h2v2h-2zM1218 632h2v2h-2zM1220 634h2v2h-2zM1222 636h2v2h-2zM1224 638h2v2h-2zM1226 639h2v2h-2zM1228 641h2v2h-2zM1230 643h2v2h-2zM1232 645h2v2h-2zM1234 647h2v2h-2zM1236 650h2v2h-2zM1238 652h2v2h-2zM1240 654h2v2h-2zM1241 656h2v2h-2zM1243 658h2v2h-2zM1245 661h2v2h-2zM1247 663h2v2h-2zM1249 665h2v2h-2zM1251 668h2v2h-2zM1253 670h2v2h-2zM1255 672h2v2h-2zM1257 675h2v2h-2zM1259 678h2v2h-2zM1261 680h2v2h-2zM1263 683h2v2h-2zM1265 685h2v2h-2zM1267 688h2v2h-2zM1269 691h2v2h-2zM1271 694h2v2h-2zM1273 696h2v2h-2zM1275 699h2v2h-2zM1277 702h2v2h-2zM1279 705h2v2h-2zM1281 708h2v2h-2zM1283 711h2v2h-2zM1285 714h2v2h-2zM1287 717h2v2h-2zM1289 720h2v2h-2zM1291 723h2v2h-2zM1293 725h2v2h-2zM1295 728h2v2h-2zM1296 731h2v2h-2zM1298 733h2v2h-2zM1300 735h2v2h-2z" fill="#b4a446"/><path d="M705 589h7v1h-7zM706 590h1v1h-1zM711 590h1v1h-1zM706 591h1v1h-1zM710 591h1v1h-1zM707 592h1v1h-1zM710 592h1v1h-1zM707 593h1v1h-1zM709 593h1v1h-1zM708 594h1v1h-1zM709 594h1v1h-1zM708 595h1v1h-1z" fill="#ff0000"/><path d="M868 901h7v1h-7zM869 902h1v1h-1zM874 902h1v1h-1zM869 903h1v1h-1zM873 903h1v1h-1zM870 904h1v1h-1zM873 904h1v1h-1zM870 905h1v1h-1zM872 905h1v1h-1zM871 906h1v1h-1zM872 906h1v1h-1zM871 907h1v1h-1z" fill="#00ff00"/><path d="M1139 595h7v1h-7zM1140 596h1v1h-1zM1145 596h1v1h-1zM1140 597h1v1h-1zM1144 597h1v1h-1zM1141 598h1v1h-1zM1144 598h1v1h-1zM1141 599h1v1h-1zM1143 599h1v1h-1zM1142 600h1v1h-1zM1143 600h1v1h-1zM1142 601h1v1h-1z" fill="#0000ff"/></svg>
</body></html>
